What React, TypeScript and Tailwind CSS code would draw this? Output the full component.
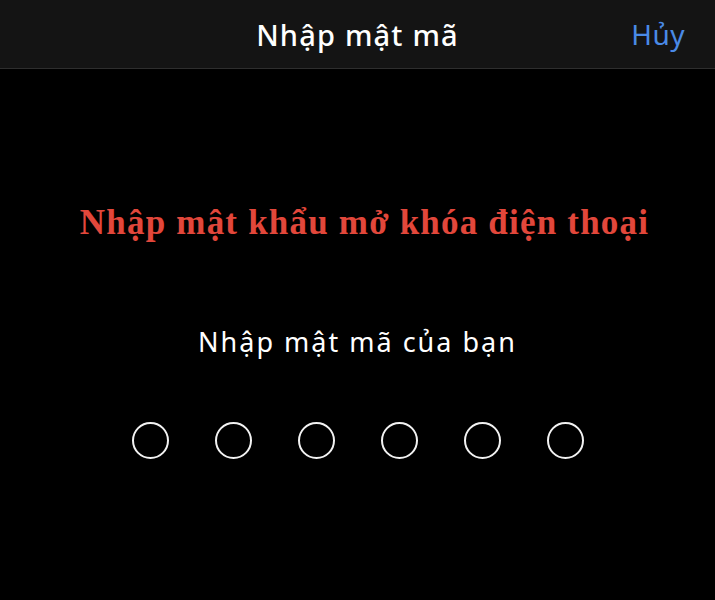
import React from 'react';

export default function App() {
    const dots = [0, 1, 2, 3, 4, 5];

    return (
        <div className="flex h-[600px] w-[715px] flex-col bg-black text-white" style={{ fontFamily: '"Noto Sans", Roboto, sans-serif' }}>
            {/* Header */}
            <header className="relative flex h-[69px] shrink-0 items-center justify-center border-b border-[#2e2e2e] bg-[#141414]">
                <h1 className="text-[29px] font-medium leading-none tracking-[1.2px] text-white">Nhập mật mã</h1>
                <button className="absolute top-1/2 right-[30px] -translate-y-1/2 text-[28px] leading-none tracking-[0.5px] text-[#4a8ae6]">Hủy</button>
            </header>

            {/* Content */}
            <main className="flex flex-1 flex-col items-center">
                <p
                    className="mt-[136px] ml-[14px] text-[35px] leading-none font-bold tracking-[1.2px] text-[#e2473b]"
                    style={{ fontFamily: '"Liberation Serif", "Times New Roman", serif' }}
                >
                    Nhập mật khẩu mở khóa điện thoại
                </p>

                <p className="mt-[88px] text-[27px] leading-none tracking-[2px] text-white">Nhập mật mã của bạn</p>

                <div className="mt-[67px] flex gap-[46px]">
                    {dots.map((d) => (
                        <div key={d} className="h-[37px] w-[37px] rounded-full border-2 border-[#f2f2f2]" />
                    ))}
                </div>
            </main>
        </div>
    );
}
